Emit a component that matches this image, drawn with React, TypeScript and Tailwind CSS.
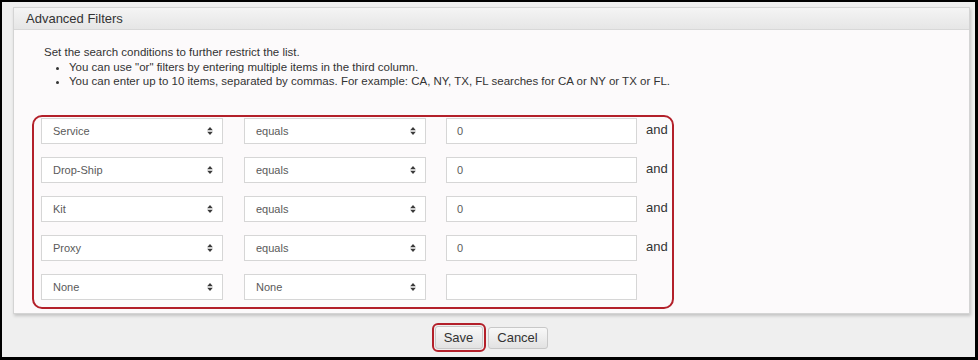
import React from "react";

const Chevrons = () => (
  <svg width="8" height="12" viewBox="0 0 8 12" className="shrink-0">
    <path d="M4 2 L6.8 5.2 L1.2 5.2 Z" fill="#3a3a3a" />
    <path d="M4 10 L6.8 6.8 L1.2 6.8 Z" fill="#3a3a3a" />
  </svg>
);

const Select = ({ value }: { value: string }) => (
  <div className="flex h-[26px] w-[182px] items-center justify-between border border-[#d6d6d6] bg-white pl-[11px] pr-[8px] text-[11px] text-[#5a5a5a]">
    <span>{value}</span>
    <Chevrons />
  </div>
);

const rows = [
  { f: "Service", op: "equals", v: "0", and: true },
  { f: "Drop-Ship", op: "equals", v: "0", and: true },
  { f: "Kit", op: "equals", v: "0", and: true },
  { f: "Proxy", op: "equals", v: "0", and: true },
  { f: "None", op: "None", v: "", and: false },
];

export default function App() {
  return (
    <div
      className="box-border h-[360px] w-[978px] border-[2px] border-b-[3px] border-r-[3px] border-black bg-[#efefef] text-[#333]"
      style={{ fontFamily: '"Liberation Sans", Arial, sans-serif' }}
    >
      <div className="ml-[11px] mt-[5px] w-[957px] border border-[#d4d4d4] bg-[#fcfafb] shadow-[1px_2px_3px_rgba(0,0,0,0.18)]">
        <div className="flex h-[22px] items-center border-b border-[#d8d8d8] bg-gradient-to-b from-[#f4f4f4] to-[#e6e6e6] pl-[12px] text-[13px] text-[#333]">
          Advanced Filters
        </div>
        <div className="pl-[18px] pb-[4px]">
          <div className="mt-[15px] pl-[12px] text-[11.5px] leading-[14px] text-[#333]">
            Set the search conditions to further restrict the list.
          </div>
          <ul className="mt-[2px] list-disc pl-[37px] text-[11.5px] leading-[13.5px] text-[#333]">
            <li>You can use "or" filters by entering multiple items in the third column.</li>
            <li>You can enter up to 10 items, separated by commas. For example: CA, NY, TX, FL searches for CA or NY or TX or FL.</li>
          </ul>
          <div className="mt-[27px] w-[642px] rounded-[10px] border-2 border-[#b3202a] pl-[7px] pt-[1px] pb-[7px]">
            <div className="flex flex-col gap-[13px]">
              {rows.map((r, i) => (
                <div key={i} className="flex items-center">
                  <Select value={r.f} />
                  <div className="ml-[21px]">
                    <Select value={r.op} />
                  </div>
                  <div className="ml-[20px] flex h-[26px] w-[191px] items-center border border-[#d6d6d6] bg-white pl-[10px] text-[11px] text-[#5a5a5a]">
                    {r.v}
                  </div>
                  {r.and && (
                    <span className="ml-[9px] -mt-[3px] text-[13px] text-[#333]">and</span>
                  )}
                </div>
              ))}
            </div>
          </div>
        </div>
      </div>
      <div className="mt-[9px] flex justify-center pl-[2px]">
        <div className="rounded-[6px] border-2 border-[#b3202a] p-[1px]">
          <button className="flex h-[23px] w-[48px] items-center justify-center rounded-[3px] border border-[#c8c8c8] bg-gradient-to-b from-[#f8f8f8] to-[#e2e2e2] text-[13px] text-[#333]">
            Save
          </button>
        </div>
        <button className="ml-[2px] mt-[4px] flex h-[22px] w-[60px] items-center justify-center rounded-[3px] border border-[#c8c8c8] bg-gradient-to-b from-[#f8f8f8] to-[#e2e2e2] text-[13px] text-[#333]">
          Cancel
        </button>
      </div>
    </div>
  );
}
